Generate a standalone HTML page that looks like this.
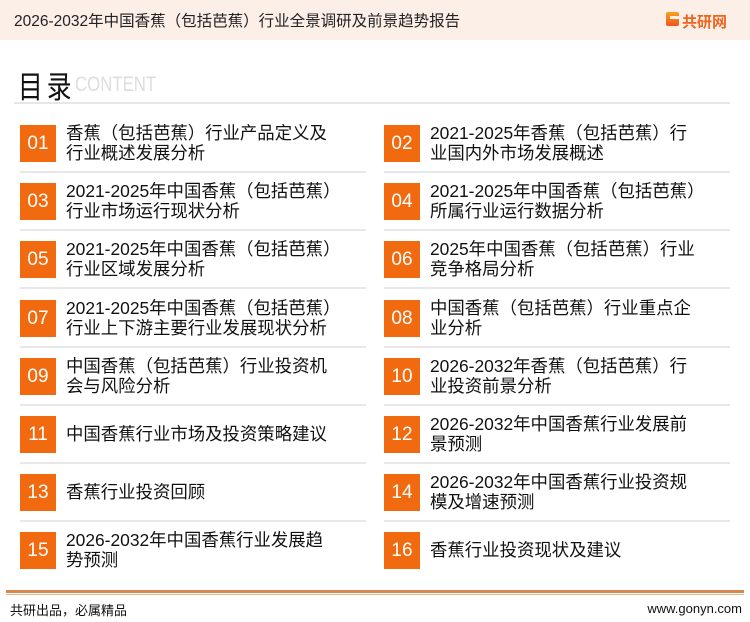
<!DOCTYPE html>
<html><head><meta charset="utf-8"><style>
*{margin:0;padding:0;box-sizing:border-box}
body{width:750px;height:622px;background:#fff;font-family:"Liberation Sans","Noto Sans CJK SC",sans-serif;position:relative;overflow:hidden;color:#111}
.hdr{position:absolute;left:0;top:0;width:750px;height:40px;background:#fcefe8}
.hdr .t{position:absolute;left:14px;top:9px;font-size:15.5px;color:#222}
.logo{position:absolute;top:11px;font-size:15px;font-weight:bold;color:#f0641e}
.gi{position:absolute;left:666px;top:12px;width:13px;height:14px;background:linear-gradient(#f7a21d,#f0531e);border-radius:2px}
.gi:after{content:"";position:absolute;left:4px;top:4px;width:9px;height:3px;background:#fcefe8}
.ml{position:absolute;left:18px;top:62px;font-size:31px;color:#111;letter-spacing:5px;transform:scaleX(0.8);transform-origin:left;white-space:nowrap}
.ct{position:absolute;left:75px;top:73px;font-size:21px;color:#ddd;transform:scaleX(0.8);transform-origin:left}
.hl{position:absolute;left:14px;top:102px;width:716px;height:2px;background:#e6e6e6}
.it{position:absolute;width:346px;height:58px}
.num{position:absolute;left:0;top:0;width:36px;height:37px;background:#f26a0f;color:#fff;font-size:19px;text-align:center;line-height:37px}
.tx{position:absolute;left:46px;top:-2px;font-size:17.4px;line-height:20px;width:300px;color:#111;white-space:nowrap}
.tx.one{top:8px}
.sep{position:absolute;left:0;top:46px;width:346px;height:2px;background:#e8e8e8}
.f1{position:absolute;left:6px;top:590px;width:738px;height:3px;background:#d9874a}
.f2{position:absolute;left:6px;top:594px;width:738px;height:1px;background:#e8b890}
.fl{position:absolute;left:10px;top:600px;font-size:13px;color:#111}
.fr{position:absolute;right:8px;top:601px;font-size:13px;color:#111}
</style></head><body>
<div class="hdr"><div class="t">2026-2032年中国香蕉（包括芭蕉）行业全景调研及前景趋势报告</div><div class="gi"></div><div class="logo" style="left:682px">共研网</div></div>
<div class="ml">目录</div><div class="ct">CONTENT</div>
<div class="hl"></div>

<div class="it" style="left:20px;top:125px"><div class="num">01</div><div class="tx">香蕉（包括芭蕉）行业产品定义及<br>行业概述发展分析</div><div class="sep"></div></div>
<div class="it" style="left:384px;top:125px"><div class="num">02</div><div class="tx">2021-2025年香蕉（包括芭蕉）行<br>业国内外市场发展概述</div><div class="sep"></div></div>
<div class="it" style="left:20px;top:183px"><div class="num">03</div><div class="tx">2021-2025年中国香蕉（包括芭蕉）<br>行业市场运行现状分析</div><div class="sep"></div></div>
<div class="it" style="left:384px;top:183px"><div class="num">04</div><div class="tx">2021-2025年中国香蕉（包括芭蕉）<br>所属行业运行数据分析</div><div class="sep"></div></div>
<div class="it" style="left:20px;top:241px"><div class="num">05</div><div class="tx">2021-2025年中国香蕉（包括芭蕉）<br>行业区域发展分析</div><div class="sep"></div></div>
<div class="it" style="left:384px;top:241px"><div class="num">06</div><div class="tx">2025年中国香蕉（包括芭蕉）行业<br>竞争格局分析</div><div class="sep"></div></div>
<div class="it" style="left:20px;top:300px"><div class="num">07</div><div class="tx">2021-2025年中国香蕉（包括芭蕉）<br>行业上下游主要行业发展现状分析</div><div class="sep"></div></div>
<div class="it" style="left:384px;top:300px"><div class="num">08</div><div class="tx">中国香蕉（包括芭蕉）行业重点企<br>业分析</div><div class="sep"></div></div>
<div class="it" style="left:20px;top:358px"><div class="num">09</div><div class="tx">中国香蕉（包括芭蕉）行业投资机<br>会与风险分析</div><div class="sep"></div></div>
<div class="it" style="left:384px;top:358px"><div class="num">10</div><div class="tx">2026-2032年香蕉（包括芭蕉）行<br>业投资前景分析</div><div class="sep"></div></div>
<div class="it" style="left:20px;top:416px"><div class="num">11</div><div class="tx one">中国香蕉行业市场及投资策略建议</div><div class="sep"></div></div>
<div class="it" style="left:384px;top:416px"><div class="num">12</div><div class="tx">2026-2032年中国香蕉行业发展前<br>景预测</div><div class="sep"></div></div>
<div class="it" style="left:20px;top:474px"><div class="num">13</div><div class="tx one">香蕉行业投资回顾</div><div class="sep"></div></div>
<div class="it" style="left:384px;top:474px"><div class="num">14</div><div class="tx">2026-2032年中国香蕉行业投资规<br>模及增速预测</div><div class="sep"></div></div>
<div class="it" style="left:20px;top:532px"><div class="num">15</div><div class="tx">2026-2032年中国香蕉行业发展趋<br>势预测</div></div>
<div class="it" style="left:384px;top:532px"><div class="num">16</div><div class="tx one">香蕉行业投资现状及建议</div></div>

<div class="f1"></div><div class="f2"></div>
<div class="fl">共研出品，必属精品</div><div class="fr">www.gonyn.com</div>
</body></html>
